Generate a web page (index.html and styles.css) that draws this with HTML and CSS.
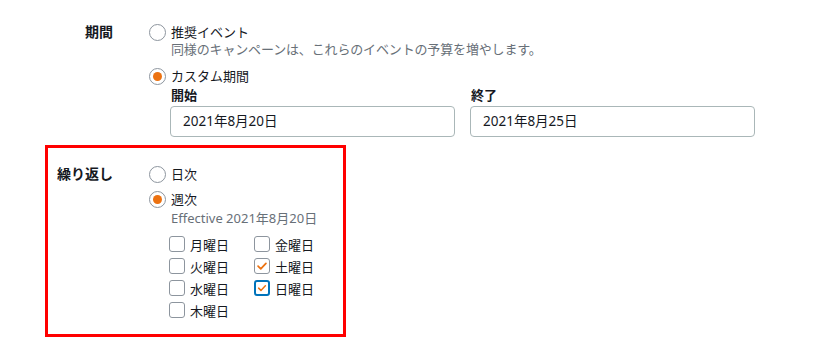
FILE: index.html
```html
<!DOCTYPE html>
<html>
	<head>
		<title>キャンペーン期間</title>
		<link rel="stylesheet" href="styles.css">
	</head>
	<body>
		<div class="field period">
			<div class="field-label">期間</div>
			<div class="field-body">
				<label class="radio">
					<span class="dot"></span>推奨イベント
				</label>
				<div class="hint desc">同様のキャンペーンは、これらのイベントの予算を増やします。</div>
				<label class="radio on custom">
					<span class="dot"></span>カスタム期間
				</label>
				<div class="dates">
					<div class="date">
						<div class="date-label">開始</div>
						<div class="input">2021年8月20日</div>
					</div>
					<div class="date">
						<div class="date-label">終了</div>
						<div class="input">2021年8月25日</div>
					</div>
				</div>
			</div>
		</div>
		<div class="field repeat">
			<div class="field-label">繰り返し</div>
			<div class="field-body">
				<label class="radio">
					<span class="dot"></span>日次
				</label>
				<label class="radio on weekly">
					<span class="dot"></span>週次
				</label>
				<div class="hint effective">Effective 2021年8月20日</div>
				<div class="days">
					<label class="check"><span class="box"></span>月曜日</label>
					<label class="check"><span class="box"></span>火曜日</label>
					<label class="check"><span class="box"></span>水曜日</label>
					<label class="check"><span class="box"></span>木曜日</label>
					<label class="check"><span class="box"></span>金曜日</label>
					<label class="check on"><span class="box"><svg viewBox="0 0 16 16"><path d="M3.5 8.2 L6.6 11.2 L12.5 5" /></svg></span>土曜日</label>
					<label class="check on focus"><span class="box"><svg viewBox="0 0 16 16"><path d="M3.5 8.2 L6.6 11.2 L12.5 5" /></svg></span>日曜日</label>
				</div>
			</div>
		</div>
	</body>
</html>
```

FILE: styles.css
```css
body {
	margin: 0;
	padding-top: 23px;
	background: white;
	color: #16191f;
	font: 400 13px "Noto Sans", "Noto Sans CJK JP", sans-serif;
}
.field {
	display: grid;
	grid-template-columns: 113px 1fr;
	column-gap: 36px;
}
.field-label {
	text-align: right;
	font-weight: bold;
	font-size: 14px;
	line-height: 18px;
}
.field-body {
	display: flex;
	flex-direction: column;
}
.radio {
	display: flex;
	align-items: center;
	height: 18px;
	line-height: 18px;
}
.dot {
	box-sizing: border-box;
	width: 17px;
	height: 17px;
	margin-right: 5px;
	border: 1px solid #8d959e;
	border-radius: 50%;
	display: flex;
	align-items: center;
	justify-content: center;
}
.radio.on .dot::after {
	content: "";
	width: 9px;
	height: 9px;
	border-radius: 50%;
	background: #ec7211;
}
.hint {
	margin-left: 22px;
	color: #687078;
	line-height: 16px;
}
.desc {
	letter-spacing: -0.15px;
}
.custom {
	margin-top: 10px;
}
.dates {
	display: flex;
	gap: 15px;
	margin-left: 21px;
	margin-top: 1px;
}
.date-label {
	font-weight: bold;
	line-height: 18px;
	padding-left: 1px;
}
.input {
	box-sizing: border-box;
	width: 285px;
	height: 31px;
	margin-top: 2px;
	padding: 0 12px;
	border: 1px solid #aab7b8;
	border-radius: 4px;
	font-size: 13.5px;
	line-height: 29px;
}
.repeat {
	box-sizing: border-box;
	width: 301px;
	margin: 8px 0 0 45px;
	padding: 17px 0 13px;
	border: 3px solid #ff0000;
	grid-template-columns: 65px 1fr;
}
.weekly {
	margin-top: 7px;
}
.effective {
	margin-top: 2px;
	line-height: 17px;
}
.days {
	display: grid;
	grid-template-rows: repeat(4, 22px);
	grid-template-columns: 85px 85px;
	grid-auto-flow: column;
	margin: 6px 0 0 20px;
}
.check {
	display: flex;
	align-items: center;
}
.box {
	box-sizing: border-box;
	width: 16px;
	height: 16px;
	margin-right: 5px;
	border: 1px solid #8d959e;
	border-radius: 3px;
	display: flex;
	align-items: center;
	justify-content: center;
}
.box svg {
	width: 14px;
	height: 14px;
}
.box path {
	fill: none;
	stroke: #ec7211;
	stroke-width: 2;
	stroke-linecap: round;
	stroke-linejoin: round;
}
.check.focus .box {
	border: 2px solid #0073bb;
}
.check.focus .box svg {
	width: 12px;
	height: 12px;
}
```
